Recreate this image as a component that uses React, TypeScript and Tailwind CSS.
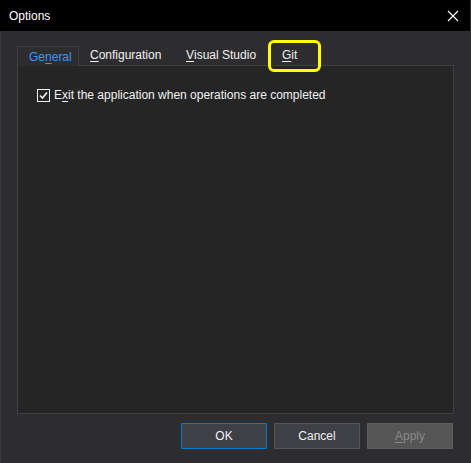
import React from 'react';

const Tab: React.FC<{ active?: boolean; w: string; children: React.ReactNode }> = ({ active, w, children }) => (
  <div
    className={`h-[20px] pl-[11px] flex items-center text-[12px] ${w} ${
      active ? 'border border-b-0 border-[#3f3f46] text-[#3399ff] bg-[#2d2d30] -mb-px z-10 relative' : 'text-[#f1f1f1]'
    }`}
  >
    {children}
  </div>
);

const Button: React.FC<{ variant?: 'default' | 'normal' | 'disabled'; children: React.ReactNode }> = ({
  variant = 'normal',
  children,
}) => {
  const styles =
    variant === 'default'
      ? 'bg-[#3f3f46] border-[#007acc] text-[#f1f1f1]'
      : variant === 'disabled'
      ? 'bg-[#555555] border-[#5e5e5e] text-[#8a8a8a]'
      : 'bg-[#3f3f46] border-[#555555] text-[#f1f1f1]';
  return (
    <div className={`w-[86px] h-[26px] border flex items-center justify-center text-[12px] ${styles}`}>
      {children}
    </div>
  );
};

export default function App() {
  return (
    <div
      className="w-[471px] h-[463px] bg-[#2d2d30] flex flex-col overflow-hidden"
      style={{ fontFamily: '"Liberation Sans", Arial, sans-serif' }}
    >
      {/* Title bar */}
      <div className="h-[31px] bg-black flex items-center justify-between pl-[9px] pr-[11px] shrink-0 mr-px">
        <span className="text-white text-[12px]">Options</span>
        <svg width="12" height="12" viewBox="0 0 12 12" className="text-white">
          <path d="M1 1 L11 11 M11 1 L1 11" stroke="currentColor" strokeWidth="1.2" />
        </svg>
      </div>

      <div className="flex-1 flex flex-col pl-[16px] pr-[17px] pt-[15px] border-l border-[#3a3a3d]">
        {/* Tabs */}
        <div className="flex items-end h-[19px]">
          <Tab active w="w-[62px]">
            Ge<span className="underline underline-offset-2">n</span>eral
          </Tab>
          <Tab w="w-[96px]">
            <span className="underline underline-offset-2">C</span>onfiguration
          </Tab>
          <Tab w="w-[96px]">
            <span className="underline underline-offset-2">V</span>isual Studio
          </Tab>
          <div className="relative">
            <Tab w="w-[40px]">
              <span>
                <span className="underline underline-offset-2">G</span>it
              </span>
            </Tab>
            <div className="absolute left-[-3px] top-[-5px] w-[53px] h-[32px] border-[3px] border-[#ffff00] rounded-[6px] pointer-events-none" />
          </div>
        </div>

        {/* Panel */}
        <div className="h-[349px] bg-[#252526] border border-[#3f3f46] pt-[23px] pl-[19px]">
          <div className="flex items-center gap-[4px] text-[12px] leading-[13px] text-[#f1f1f1]">
            <div className="w-[13px] h-[13px] border border-[#f1f1f1] flex items-center justify-center">
              <svg width="9" height="9" viewBox="0 0 9 9">
                <path d="M1 4.5 L3.5 7 L8 1.5" stroke="#f1f1f1" strokeWidth="1.6" fill="none" />
              </svg>
            </div>
            <span>
              E<span className="underline underline-offset-2">x</span>it the application when operations are completed
            </span>
          </div>
        </div>

        {/* Buttons */}
        <div className="flex justify-end gap-[7px] mt-[9px] mr-px">
          <Button variant="default">OK</Button>
          <Button>Cancel</Button>
          <Button variant="disabled">
            <span>
              <span className="underline underline-offset-2">A</span>pply
            </span>
          </Button>
        </div>
      </div>
    </div>
  );
}
